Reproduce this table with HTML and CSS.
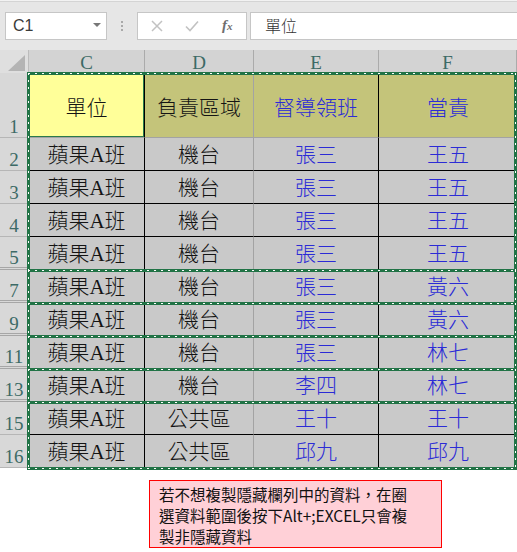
FILE: index.html
```html
<!DOCTYPE html>
<html lang="zh-Hant">
<head>
<meta charset="utf-8">
<link rel="stylesheet" href="styles.css">
</head>
<body>
<div class="toolbar">
  <div class="namebox"><span class="nb-text">C1</span><span class="caret"></span></div>
  <div class="vdots"><i></i><i></i><i></i></div>
  <div class="fbtns">
    <svg class="ic-x" width="12" height="12" viewBox="0 0 12 12"><path d="M1 1L11 11M11 1L1 11" stroke="#c2c2c2" stroke-width="1.5" fill="none"/></svg>
    <svg class="ic-check" width="14" height="12" viewBox="0 0 14 12"><path d="M1 6.5L5 10.5L13 1.5" stroke="#c2c2c2" stroke-width="1.6" fill="none"/></svg>
    <span class="fx">f<span class="fx-x">x</span></span>
  </div>
  <div class="finput">單位</div>
</div>

<div class="colhead">
  <div class="corner"><span class="tri"></span></div>
  <div class="ch">C</div>
  <div class="ch">D</div>
  <div class="ch">E</div>
  <div class="ch">F</div>
</div>

<div class="sheet">
  <div class="block">
    <div class="row r1">
      <div class="rh">1</div>
      <div class="c cC sel">單位</div>
      <div class="c cD">負責區域</div>
      <div class="c cE blue">督導領班</div>
      <div class="c cF blue">當責</div>
    </div>
    <div class="row">
      <div class="rh">2</div>
      <div class="c cC">蘋果A班</div><div class="c cD">機台</div><div class="c cE blue">張三</div><div class="c cF blue">王五</div>
    </div>
    <div class="row">
      <div class="rh">3</div>
      <div class="c cC">蘋果A班</div><div class="c cD">機台</div><div class="c cE blue">張三</div><div class="c cF blue">王五</div>
    </div>
    <div class="row">
      <div class="rh">4</div>
      <div class="c cC">蘋果A班</div><div class="c cD">機台</div><div class="c cE blue">張三</div><div class="c cF blue">王五</div>
    </div>
    <div class="row">
      <div class="rh hid">5</div>
      <div class="c cC">蘋果A班</div><div class="c cD">機台</div><div class="c cE blue">張三</div><div class="c cF blue">王五</div>
    </div>
  </div>
  <div class="block">
    <div class="row">
      <div class="rh hid">7</div>
      <div class="c cC">蘋果A班</div><div class="c cD">機台</div><div class="c cE blue">張三</div><div class="c cF blue">黃六</div>
    </div>
  </div>
  <div class="block">
    <div class="row">
      <div class="rh hid">9</div>
      <div class="c cC">蘋果A班</div><div class="c cD">機台</div><div class="c cE blue">張三</div><div class="c cF blue">黃六</div>
    </div>
  </div>
  <div class="block">
    <div class="row">
      <div class="rh hid">11</div>
      <div class="c cC">蘋果A班</div><div class="c cD">機台</div><div class="c cE blue">張三</div><div class="c cF blue">林七</div>
    </div>
  </div>
  <div class="block">
    <div class="row">
      <div class="rh hid">13</div>
      <div class="c cC">蘋果A班</div><div class="c cD">機台</div><div class="c cE blue">李四</div><div class="c cF blue">林七</div>
    </div>
  </div>
  <div class="block">
    <div class="row">
      <div class="rh">15</div>
      <div class="c cC">蘋果A班</div><div class="c cD">公共區</div><div class="c cE blue">王十</div><div class="c cF blue">王十</div>
    </div>
    <div class="row">
      <div class="rh">16</div>
      <div class="c cC">蘋果A班</div><div class="c cD">公共區</div><div class="c cE blue">邱九</div><div class="c cF blue">邱九</div>
    </div>
  </div>
</div>

<div class="note">若不想複製隱藏欄列中的資料，在圈<br>選資料範圍後按下Alt+;EXCEL只會複<br>製非隱藏資料</div>
</body>
</html>
```

FILE: styles.css
```css
* { box-sizing: border-box; }
html, body { margin: 0; padding: 0; }
body {
  width: 517px;
  height: 552px;
  background: #fff;
  overflow: hidden;
  font-family: "Liberation Sans", "Noto Sans CJK TC", sans-serif;
}

/* ---------- formula bar ---------- */
.toolbar {
  height: 50px;
  display: flex;
  align-items: flex-start;
  padding: 12px 0 0 5px;
  background: linear-gradient(#f2f2f2 0 1px, #d4d4d4 1px 2px, #e6e6e6 2px);
}
.namebox {
  width: 102px;
  height: 28px;
  flex: none;
  background: #fff;
  border: 1px solid #c6c6c6;
  display: flex;
  align-items: center;
  justify-content: space-between;
  padding: 0 5px 0 7px;
}
.nb-text {
  font-family: "Liberation Sans", sans-serif;
  font-size: 16px;
  color: #3a3a3a;
}
.caret {
  width: 0;
  height: 0;
  border-left: 4px solid transparent;
  border-right: 4px solid transparent;
  border-top: 4px solid #777;
  margin-top: -2px;
}
.vdots {
  width: 30px;
  height: 28px;
  flex: none;
  display: flex;
  flex-direction: column;
  align-items: center;
  justify-content: center;
  gap: 2px;
}
.vdots i {
  display: block;
  width: 2px;
  height: 2px;
  background: #a9a9a9;
}
.fbtns {
  width: 110px;
  height: 28px;
  flex: none;
  background: #fff;
  border: 1px solid #c6c6c6;
  display: flex;
  align-items: center;
  padding-left: 13px;
}
.ic-x { margin-right: 22px; }
.ic-check { margin-right: 23px; }
.fx {
  font-family: "Liberation Serif", serif;
  font-style: italic;
  font-weight: bold;
  font-size: 15px;
  color: #6e6e6e;
  margin-top: -2px;
}
.fx-x { font-size: 11px; }
.finput {
  flex: 1;
  height: 28px;
  margin-left: 3px;
  margin-right: -2px;
  background: #fff;
  border: 1px solid #c6c6c6;
  padding-left: 14px;
  font-family: "Noto Sans CJK TC", sans-serif;
  font-weight: 300;
  font-size: 16px;
  line-height: 25px;
  color: #333;
}

/* ---------- column header ---------- */
.colhead {
  display: grid;
  grid-template-columns: 29px 116px 109px 125px 138px;
  height: 23px;
  background: #d3d3d3;
}
.corner {
  background: #dfdfdf;
  border-right: 1px solid #bcbcbc;
  display: flex;
  align-items: flex-end;
  justify-content: flex-end;
  padding: 0 3px 2px 0;
}
.tri {
  width: 0;
  height: 0;
  border-left: 17px solid transparent;
  border-bottom: 16px solid #b4b4b4;
}
.ch {
  display: flex;
  align-items: center;
  justify-content: center;
  font-family: "Liberation Serif", serif;
  font-size: 19px;
  line-height: 1;
  color: #3c6a66;
  border-right: 1px solid #ababab;
  padding-top: 2px;
}

/* ---------- sheet ---------- */
.sheet {
  display: flex;
  flex-direction: column;
}
.block { position: relative; }
.block::after {
  content: "";
  position: absolute;
  top: -1px;
  bottom: -2px;
  left: 27px;
  right: 0;
  border: 3px solid #217346;
  z-index: 1;
  pointer-events: none;
}
.block::before {
  content: "";
  position: absolute;
  top: 0;
  bottom: -1px;
  left: 28px;
  right: 1px;
  z-index: 2;
  pointer-events: none;
  background:
    repeating-linear-gradient(90deg, #fff 0 2px, transparent 2px 7px) left top / 100% 1px no-repeat,
    repeating-linear-gradient(90deg, #fff 0 2px, transparent 2px 7px) left bottom / 100% 1px no-repeat,
    repeating-linear-gradient(180deg, #fff 0 2px, transparent 2px 7px) left top / 1px 100% no-repeat,
    repeating-linear-gradient(180deg, #fff 0 2px, transparent 2px 7px) right top / 1px 100% no-repeat;
}
.row {
  display: grid;
  grid-template-columns: 29px 116px 109px 125px 138px;
  height: 33px;
}
.row.r1 { height: 65px; }

.rh {
  background: #d8d8d8;
  border-right: 1px solid #a9a9a9;
  border-bottom: 1px solid #b6b6b6;
  display: flex;
  align-items: flex-end;
  justify-content: center;
  font-family: "Liberation Serif", serif;
  font-size: 19px;
  line-height: 1;
  color: #3c6a66;
  padding-bottom: 1px;
}
.rh.hid { border-bottom: 3px double #a6a6a6; padding-bottom: 0; }

.c {
  display: flex;
  align-items: center;
  justify-content: center;
  background: #c9c9c9;
  border-bottom: 1px solid #000;
  font-family: "Liberation Serif", "Noto Sans CJK TC", serif;
  font-weight: 300;
  font-size: 21px;
  line-height: 1;
  color: #141414;
  padding-top: 2px;
}
.cC, .cE { border-right: 1px solid #000; }
.cD { border-right: 1px solid #a3a3a3; }
.r1 .c {
  background: #c4c47a;
  border-bottom-color: #a3a3a3;
  padding-top: 6px;
}
.r1 .sel {
  background: #ffff99;
  box-shadow: inset -1px -1px 0 #2b7a4b;
}
.blue { color: #2b2bd6; }

/* ---------- note ---------- */
.note {
  margin: 12px 0 0 149px;
  width: 293px;
  height: 68px;
  border: 1px solid #ff0000;
  background: #ffd0d7;
  padding: 3px 0 0 9px;
  font-family: "Noto Sans CJK TC", sans-serif;
  font-size: 15.5px;
  line-height: 21px;
  color: #111;
  white-space: nowrap;
}
```
